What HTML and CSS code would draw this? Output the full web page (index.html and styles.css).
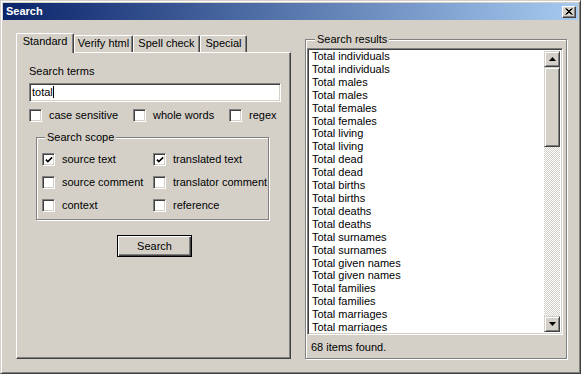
FILE: index.html
```html
<!DOCTYPE html>
<html>
<head>
<meta charset="utf-8">
<link rel="stylesheet" href="styles.css">
</head>
<body>
<div class="window">
  <div class="titlebar">
    <span class="title">Search</span>
    <span class="close"><svg width="8" height="7" viewBox="0 0 8 7"><path d="M0.5 0.5 L6.5 6.5 M1.5 0.5 L7.5 6.5 M6.5 0.5 L0.5 6.5 M7.5 0.5 L1.5 6.5" stroke="#000" stroke-width="1" fill="none"/></svg></span>
  </div>
  <div class="content">
    <div class="tabctl">
      <div class="tabs">
        <span class="tab sel t1">Standard</span>
        <span class="tab t2">Verify html</span>
        <span class="tab t3">Spell check</span>
        <span class="tab t4">Special</span>
      </div>
      <div class="panel">
        <div class="label">Search terms</div>
        <div class="input"><span class="caret">total</span></div>
        <div class="opts">
          <label class="opt w1"><span class="cb"></span>case sensitive</label>
          <label class="opt w2"><span class="cb"></span>whole words</label>
          <label class="opt"><span class="cb"></span>regex</label>
        </div>
        <div class="group scope">
          <span class="glabel">Search scope</span>
          <div class="scope-grid">
            <label class="opt"><span class="cb"><svg width="9" height="9" viewBox="0 0 9 9"><path d="M1 3.5 L3.2 5.8 L8 1" stroke="#000" stroke-width="1.8" fill="none"/></svg></span>source text</label>
            <label class="opt"><span class="cb"><svg width="9" height="9" viewBox="0 0 9 9"><path d="M1 3.5 L3.2 5.8 L8 1" stroke="#000" stroke-width="1.8" fill="none"/></svg></span>translated text</label>
            <label class="opt"><span class="cb"></span>source comment</label>
            <label class="opt"><span class="cb"></span>translator comment</label>
            <label class="opt"><span class="cb"></span>context</label>
            <label class="opt"><span class="cb"></span>reference</label>
          </div>
        </div>
        <div class="button">Search</div>
      </div>
    </div>
    <div class="group results">
      <span class="glabel">Search results</span>
      <div class="listbox">
        <div class="items">
          <div>Total individuals</div>
          <div>Total individuals</div>
          <div>Total males</div>
          <div>Total males</div>
          <div>Total females</div>
          <div>Total females</div>
          <div>Total living</div>
          <div>Total living</div>
          <div>Total dead</div>
          <div>Total dead</div>
          <div>Total births</div>
          <div>Total births</div>
          <div>Total deaths</div>
          <div>Total deaths</div>
          <div>Total surnames</div>
          <div>Total surnames</div>
          <div>Total given names</div>
          <div>Total given names</div>
          <div>Total families</div>
          <div>Total families</div>
          <div>Total marriages</div>
          <div>Total marriages</div>
        </div>
        <div class="scrollbar">
          <div class="sbtn"><svg width="7" height="4" viewBox="0 0 7 4"><path d="M3.5 0 L7 4 L0 4 Z" fill="#000"/></svg></div>
          <div class="sbtn thumb"></div>
          <div class="track"></div>
          <div class="sbtn"><svg width="7" height="4" viewBox="0 0 7 4"><path d="M0 0 L7 0 L3.5 4 Z" fill="#000"/></svg></div>
        </div>
      </div>
      <div class="status">68 items found.</div>
    </div>
  </div>
</div>
</body>
</html>
```
FILE: styles.css
```css
* { box-sizing: border-box; }
html, body { margin: 0; padding: 0; }
body {
  font-family: "Liberation Sans", Arial, sans-serif;
  font-size: 11px;
  line-height: 13px;
  color: #000;
  background: #D4D0C8;
}
.window {
  width: 581px;
  height: 374px;
  background: #D4D0C8;
  border: 1px solid;
  border-color: #D4D0C8 #404040 #404040 #D4D0C8;
  box-shadow: inset 1px 1px #fff, inset -1px -1px #808080;
  padding: 2px;
  display: flex;
  flex-direction: column;
}
.titlebar {
  flex: none;
  height: 17px;
  background: linear-gradient(to right, #0A246A, #A6CAF0);
  display: flex;
  align-items: center;
  justify-content: space-between;
  padding: 0 2px 0 3px;
}
.title { color: #fff; font-weight: bold; }
.close {
  width: 14px;
  height: 12px;
  background: #D4D0C8;
  border: 1px solid;
  border-color: #fff #404040 #404040 #fff;
  box-shadow: inset -1px -1px #808080;
  display: flex;
  align-items: center;
  justify-content: center;
}
.close svg { display: block; }
.content {
  flex: 1;
  display: flex;
  gap: 14px;
  padding: 13px 11px 12px 13px;
}
.tabctl {
  width: 275px;
  display: flex;
  flex-direction: column;
}
.tabs {
  display: flex;
  align-items: flex-end;
  height: 19px;
}
.tab {
  height: 17px;
  padding: 1px 0 0 0;
  text-align: center;
  border-top: 1px solid #fff;
  border-left: 1px solid #fff;
  border-right: 1px solid #404040;
  box-shadow: inset -1px 0 #808080;
  border-top-left-radius: 2px;
  border-top-right-radius: 2px;
  white-space: nowrap;
  overflow: visible;
}
.t1 { width: 58px; }
.t2 { width: 59px; }
.t3 { width: 67px; }
.t4 { width: 47px; }
.tab.sel {
  height: 20px;
  margin-bottom: -1px;
  background: #D4D0C8;
  position: relative;
  z-index: 1;
}
.panel {
  flex: 1;
  border: 1px solid;
  border-color: #fff #404040 #404040 #fff;
  box-shadow: inset -1px -1px #808080;
  padding: 12px 10px 0 12px;
}
.input {
  margin-top: 5px;
  width: 252px;
  height: 19px;
  background: #fff;
  border: 1px solid;
  border-color: #808080 #fff #fff #808080;
  box-shadow: inset 1px 1px #404040, inset -1px -1px #D4D0C8;
  padding: 2px 2px;
}
.caret { border-right: 1px solid #000; }
.opts {
  display: flex;
  margin-top: 7px;
}
.opt {
  display: flex;
  align-items: center;
  gap: 7px;
  white-space: nowrap;
}
.w1 { width: 104px; }
.w2 { width: 96px; }
.cb {
  flex: none;
  width: 13px;
  height: 13px;
  background: #fff;
  border: 1px solid;
  border-color: #808080 #fff #fff #808080;
  box-shadow: inset 1px 1px #404040, inset -1px -1px #D4D0C8;
  padding: 1px;
  display: flex;
}
.cb svg { display: block; margin: 1px 0 0 1px; }
.group {
  border: 1px solid #808080;
  box-shadow: inset 1px 1px #fff, 1px 1px #fff;
}
.glabel {
  display: block;
  width: fit-content;
  margin: -7px 0 0 8px;
  padding: 0 2px;
  background: #D4D0C8;
}
.scope {
  margin: 15px 0 0 7px;
  width: 233px;
  padding: 0 0 2px 0;
}
.scope-grid {
  display: grid;
  grid-template-columns: 111px auto;
  grid-auto-rows: 23px;
  padding: 4px 0 0 5px;
}
.button {
  margin: 15px auto 0;
  width: 75px;
  height: 22px;
  border: 1px solid #000;
  box-shadow: inset 1px 1px #fff, inset -1px -1px #404040, inset -2px -2px #808080;
  display: flex;
  align-items: center;
  justify-content: center;
}
.results {
  flex: 1;
  margin-top: 6px;
  display: flex;
  flex-direction: column;
  padding: 0 1px;
}
.listbox {
  margin-top: 2px;
  height: 287px;
  width: 256px;
  background: #fff;
  border: 1px solid;
  border-color: #808080 #fff #fff #808080;
  box-shadow: inset 1px 1px #404040, inset -1px -1px #D4D0C8;
  padding: 1px 2px 2px 2px;
  display: flex;
}
.items {
  flex: 1;
  overflow: hidden;
  padding-left: 2px;
  line-height: 12.9px;
}
.items div { white-space: nowrap; }
.scrollbar {
  width: 16px;
  display: flex;
  flex-direction: column;
  margin-top: 1px;
}
.sbtn {
  flex: none;
  height: 16px;
  background: #D4D0C8;
  border: 1px solid;
  border-color: #D4D0C8 #404040 #404040 #D4D0C8;
  box-shadow: inset 1px 1px #fff, inset -1px -1px #808080;
  display: flex;
  align-items: center;
  justify-content: center;
}
.sbtn svg { display: block; }
.thumb { height: 80px; }
.track {
  flex: 1;
  background-color: #D4D0C8;
  background-image: repeating-conic-gradient(#fff 0 25%, #D4D0C8 0 50%);
  background-size: 2px 2px;
}
.status {
  margin: 6px 0 0 4px;
}
```
